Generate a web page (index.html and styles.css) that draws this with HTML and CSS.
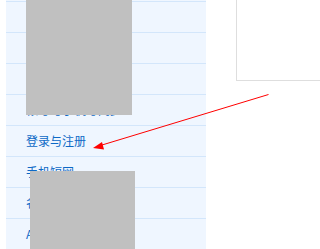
FILE: index.html
```html
<!DOCTYPE html>
<html lang="zh">
<head>
<meta charset="utf-8">
<link rel="stylesheet" href="styles.css">
</head>
<body>
<div class="page">
  <div class="panel">
    <ul class="menu">
      <li class="item"></li>
      <li class="item">常见问题解答</li>
      <li class="item">账户安全设置</li>
      <li class="item">个人资料修改</li>
      <li class="item">帐号与手机号同步</li>
      <li class="item">登录与注册</li>
      <li class="item">手机短网</li>
      <li class="item">名片与通讯录</li>
      <li class="item">APP客户端下载页</li>
    </ul>
  </div>
  <div class="content">
    <div class="frame"></div>
  </div>
</div>
<div class="mask mask-top"></div>
<div class="mask mask-bottom"></div>
<svg class="arrow" width="320" height="249" viewBox="0 0 320 249">
  <line x1="268.5" y1="94.5" x2="102" y2="145" stroke="#ff0000" stroke-width="1"/>
  <polygon points="93,148 102,142 104,149.5" fill="#ff0000"/>
</svg>
</body>
</html>
```
FILE: styles.css
```css
html, body {
  margin: 0;
  padding: 0;
  width: 320px;
  height: 249px;
  overflow: hidden;
  background: #ffffff;
  font-family: "Noto Sans CJK SC", "Liberation Sans", sans-serif;
}
.page {
  display: flex;
  height: 249px;
  padding-left: 6px;
  box-sizing: border-box;
}
.panel {
  width: 200px;
  background: #eff6ff;
  overflow: hidden;
}
.menu {
  list-style: none;
  margin: -29px 0 0 0;
  padding: 0;
}
.item {
  height: 30px;
  border-bottom: 1px solid #d3e6fb;
  padding-left: 20px;
  font-size: 12px;
  line-height: 30px;
  color: #0d69c6;
  white-space: nowrap;
}
.content {
  flex: 1;
  padding-left: 30px;
}
.frame {
  margin-top: -2px;
  height: 83px;
  border: 1px solid #dedede;
  border-right: none;
  box-sizing: border-box;
}
.mask {
  position: absolute;
  background: #c0c0c0;
}
.mask-top {
  left: 26px;
  top: 0;
  width: 106px;
  height: 115px;
}
.mask-bottom {
  left: 30px;
  top: 171px;
  width: 105px;
  height: 78px;
}
.arrow {
  position: absolute;
  left: 0;
  top: 0;
}
```
